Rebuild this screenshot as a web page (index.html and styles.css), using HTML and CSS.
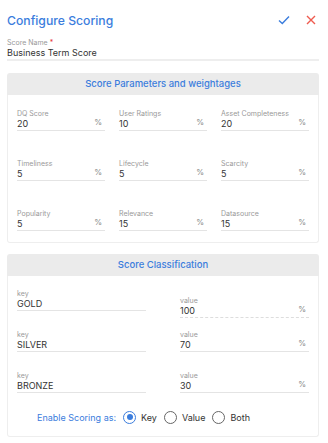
FILE: index.html
```html
<!DOCTYPE html>
<html lang="en">
<head>
  <meta charset="UTF-8" />
  <title>Configure Scoring</title>
  <link rel="stylesheet" href="styles.css">
</head>
<body>

  <div class="dialog">
    <div class="dialog-head">
      <h2>Configure Scoring</h2>
      <div class="actions">
        <svg class="icon ok" viewBox="0 0 12 10" width="12" height="10"><path d="M1 5.5 L4.3 8.5 L11 1.5" fill="none" stroke="#3b7ddd" stroke-width="1.4"/></svg>
        <svg class="icon close" viewBox="0 0 10 10" width="10" height="10"><path d="M1 1 L9 9 M9 1 L1 9" fill="none" stroke="#ef5b4f" stroke-width="1.4"/></svg>
      </div>
    </div>

    <div class="field name-field">
      <label>Score Name <span class="req">*</span></label>
      <div class="value">Business Term Score</div>
    </div>

    <div class="card">
      <div class="card-head">Score Parameters and weightages</div>
      <div class="card-body params">
        <div class="field pct"><label>DQ Score</label><div class="value">20</div><span class="unit">%</span></div>
        <div class="field pct"><label>User Ratings</label><div class="value">10</div><span class="unit">%</span></div>
        <div class="field pct"><label>Asset Completeness</label><div class="value">20</div><span class="unit">%</span></div>
        <div class="field pct"><label>Timeliness</label><div class="value">5</div><span class="unit">%</span></div>
        <div class="field pct"><label>Lifecycle</label><div class="value">5</div><span class="unit">%</span></div>
        <div class="field pct"><label>Scarcity</label><div class="value">5</div><span class="unit">%</span></div>
        <div class="field pct"><label>Popularity</label><div class="value">5</div><span class="unit">%</span></div>
        <div class="field pct"><label>Relevance</label><div class="value">15</div><span class="unit">%</span></div>
        <div class="field pct"><label>Datasource</label><div class="value">15</div><span class="unit">%</span></div>
      </div>
    </div>

    <div class="card">
      <div class="card-head">Score Classification</div>
      <div class="card-body classes">
        <div class="field"><label>key</label><div class="value">GOLD</div></div>
        <div class="field pct first-value"><label>value</label><div class="value">100</div><span class="unit">%</span></div>
        <div class="field"><label>key</label><div class="value">SILVER</div></div>
        <div class="field pct"><label>value</label><div class="value">70</div><span class="unit">%</span></div>
        <div class="field"><label>key</label><div class="value">BRONZE</div></div>
        <div class="field pct"><label>value</label><div class="value">30</div><span class="unit">%</span></div>

        <div class="enable-row">
          <span class="enable-label">Enable Scoring as:</span>
          <span class="radio checked"></span><span class="opt">Key</span>
          <span class="radio"></span><span class="opt">Value</span>
          <span class="radio"></span><span class="opt">Both</span>
        </div>
      </div>
    </div>
  </div>

</body>
</html>
```

FILE: styles.css
```css
* {
  box-sizing: border-box;
  margin: 0;
  padding: 0;
  font-family: 'Inter', 'Noto Sans', sans-serif;
}

body {
  background: #fff;
  color: #333;
  width: 328px;
}

.dialog {
  padding: 0 9px 0 7px;
}

.dialog-head {
  display: flex;
  justify-content: space-between;
  align-items: center;
  height: 38px;
  padding-top: 2px;
}

.dialog-head h2 {
  font-size: 12.2px;
  font-weight: 500;
  color: #3b7ddd;
}

.actions {
  display: flex;
  align-items: center;
  gap: 16px;
  padding-right: 3px;
}

.field {
  position: relative;
  border-bottom: 1px solid #e4e4e4;
  padding-bottom: 1px;
}

.field label {
  display: block;
  font-size: 7px;
  line-height: 9px;
  color: #999;
}

.field .value {
  font-size: 9px;
  line-height: 11px;
  color: #333;
}

.req {
  color: #e53935;
}

.name-field {
  margin-bottom: 12px;
  border-bottom-width: 2px;
  border-bottom-color: #eee;
}

.field .unit {
  position: absolute;
  right: 3px;
  top: 8px;
  font-size: 8px;
  color: #888;
}

.card {
  margin-bottom: 11px;
}

.card-head {
  background: #ebebeb;
  height: 22px;
  line-height: 22px;
  text-align: center;
  font-size: 9.5px;
  font-weight: 500;
  color: #3b7ddd;
  border-radius: 3px 3px 0 0;
}

.card-body {
  border: 1px solid #eee;
  border-top: none;
  border-radius: 0 0 3px 3px;
}

.params {
  display: grid;
  grid-template-columns: repeat(3, 1fr);
  column-gap: 14px;
  row-gap: 28px;
  padding: 14px 9px 11px 9px;
}

.classes {
  display: grid;
  grid-template-columns: 1fr 1fr;
  column-gap: 34px;
  row-gap: 19px;
  padding: 13px 9px 9px 9px;
}

.first-value {
  margin-top: 7px;
  margin-bottom: -7px;
  border-bottom: 1px dashed #ddd;
}

.enable-row {
  grid-column: 1 / 3;
  display: flex;
  align-items: center;
  justify-content: center;
  padding-right: 32px;
  margin-top: -5px;
  height: 20px;
  font-size: 9px;
}

.enable-label {
  color: #3b7ddd;
  margin-right: 7px;
}

.radio {
  width: 13px;
  height: 13px;
  border: 1px solid #666;
  border-radius: 50%;
  margin-right: 5px;
  position: relative;
}

.radio.checked {
  border-color: #3b7ddd;
}

.radio.checked::after {
  content: "";
  position: absolute;
  left: 2.5px;
  top: 2.5px;
  width: 6px;
  height: 6px;
  border-radius: 50%;
  background: #3b7ddd;
}

.opt {
  margin-right: 7px;
  color: #333;
}
```
